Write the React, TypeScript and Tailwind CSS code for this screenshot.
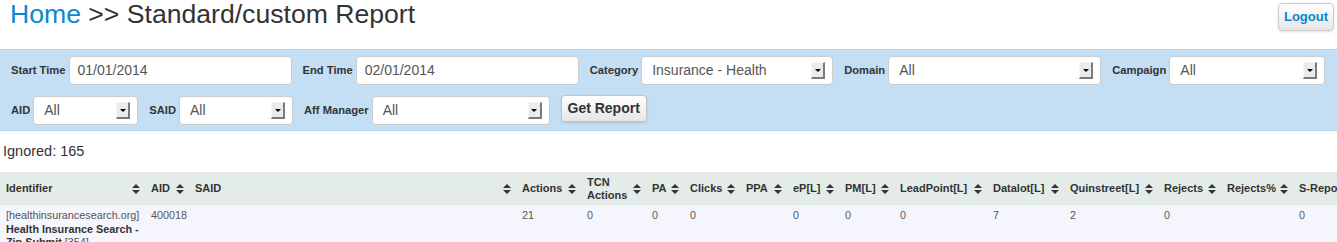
import React from 'react';

function SortIcon() {
    return (
        <svg width="8" height="10" viewBox="0 0 8 10" className="shrink-0">
            <path d="M0 4 L4 0 L8 4 Z" fill="#333" />
            <path d="M0 6 L8 6 L4 10 Z" fill="#333" />
        </svg>
    );
}

function SelectBox({ width, value }: { width: string; value: string }) {
    return (
        <div className={`${width} h-[29px] flex items-center bg-white border border-[#cccccc] rounded-[4px] pl-[10px] text-[14px] text-[#555]`}>
            <span className="flex-1">{value}</span>
            <div className="mr-[7px] w-[14px] h-[17px] flex items-center justify-center bg-[#ebebeb] border-t border-l border-[#f7f7f7] border-r-2 border-b-2 border-r-[#7a7a7a] border-b-[#7a7a7a]">
                <div className="w-0 h-0 border-l-[3px] border-r-[3px] border-t-[3px] border-l-transparent border-r-transparent border-t-black" />
            </div>
        </div>
    );
}

function TextBox({ width, value }: { width: string; value: string }) {
    return (
        <div className={`${width} h-[29px] flex items-center bg-white border border-[#cccccc] rounded-[4px] pl-[8px] text-[14px] text-[#555]`}>
            {value}
        </div>
    );
}

function Label({ children }: { children: React.ReactNode }) {
    return <span className="text-[11.2px] font-bold text-[#333] whitespace-nowrap">{children}</span>;
}

const columns: { label: React.ReactNode; w: string }[] = [
    { label: 'Identifier', w: 'w-[145px]' },
    { label: 'AID', w: 'w-[44px]' },
    { label: 'SAID', w: 'w-[327px]' },
    { label: 'Actions', w: 'w-[65px]' },
    { label: <>TCN<br />Actions</>, w: 'w-[65px]' },
    { label: 'PA', w: 'w-[38px]' },
    { label: 'Clicks', w: 'w-[56px]' },
    { label: 'PPA', w: 'w-[47px]' },
    { label: 'eP[L]', w: 'w-[52px]' },
    { label: 'PM[L]', w: 'w-[55px]' },
    { label: 'LeadPoint[L]', w: 'w-[93px]' },
    { label: 'Datalot[L]', w: 'w-[77px]' },
    { label: 'Quinstreet[L]', w: 'w-[94px]' },
    { label: 'Rejects', w: 'w-[63px]' },
    { label: 'Rejects%', w: 'w-[72px]' },
    { label: 'S-Report', w: 'w-[80px]' },
];

const row = ['', '400018', '', '21', '0', '0', '0', '', '0', '0', '0', '7', '2', '0', '', '0'];

export default function App() {
    return (
        <div className="w-[1337px] h-[242px] overflow-hidden bg-white font-['Liberation_Sans',Arial,sans-serif]">
            {/* Title bar */}
            <div className="flex items-start justify-between h-[49px]">
                <h1 className="pl-[10px] text-[26.6px] leading-[28px] text-[#333]">
                    <span className="text-[#0a88cf]">Home</span> &gt;&gt; Standard/custom Report
                </h1>
                <button className="mt-[3px] mr-[3px] h-[28px] w-[56px] rounded-[4px] border border-[#cccccc] bg-gradient-to-b from-white to-[#e6e6e6] text-[13px] font-bold text-[#0a88cf] shadow-sm">
                    Logout
                </button>
            </div>

            {/* Filters */}
            <div className="bg-[#c4def3] border-y border-[#b1d1ec] pl-[11px] pt-[6px] pb-[5px] flex flex-col gap-[11px]">
                <div className="flex items-center gap-[11px]">
                    <div className="flex items-center gap-[3px]"><Label>Start Time</Label><TextBox width="w-[223px]" value="01/01/2014" /></div>
                    <div className="flex items-center gap-[3px]"><Label>End Time</Label><TextBox width="w-[223px]" value="02/01/2014" /></div>
                    <div className="flex items-center gap-[3px]"><Label>Category</Label><SelectBox width="w-[192px]" value="Insurance - Health" /></div>
                    <div className="flex items-center gap-[3px]"><Label>Domain</Label><SelectBox width="w-[213px]" value="All" /></div>
                    <div className="flex items-center gap-[3px]"><Label>Campaign</Label><SelectBox width="w-[156px]" value="All" /></div>
                </div>
                <div className="flex items-start gap-[11px]">
                    <div className="flex items-center gap-[3px]"><Label>AID</Label><SelectBox width="w-[105px]" value="All" /></div>
                    <div className="flex items-center gap-[3px]"><Label>SAID</Label><SelectBox width="w-[114px]" value="All" /></div>
                    <div className="flex items-center gap-[3px]"><Label>Aff Manager</Label><SelectBox width="w-[178px]" value="All" /></div>
                    <button className="h-[27px] w-[86px] -mt-[1px] rounded-[4px] border border-[#c4c4c4] bg-gradient-to-b from-white to-[#e6e6e6] text-[14px] font-bold text-[#333] shadow-sm">
                        Get Report
                    </button>
                </div>
            </div>

            <div className="mt-[10px] pl-[3px] text-[14.5px] leading-[20px] text-[#333]">Ignored: 165</div>

            {/* Report table */}
            <table className="mt-[11px] w-[1373px] table-fixed border-collapse">
                <colgroup>
                    {columns.map((c, i) => <col key={i} className={c.w} />)}
                </colgroup>
                <thead>
                    <tr className="bg-[#e4ece9]">
                        {columns.map((c, i) => (
                            <th key={i} className="h-[33px] pl-[6px] pr-[5px] text-left align-middle text-[11px] leading-[13px] font-bold text-[#333]">
                                <div className="flex items-center justify-between">
                                    <span className="whitespace-nowrap">{c.label}</span>
                                    <SortIcon />
                                </div>
                            </th>
                        ))}
                    </tr>
                </thead>
                <tbody>
                    <tr className="bg-[#f5f5fd]">
                        <td className="pl-[6px] pr-[4px] pt-[4px] pb-[4px] align-top text-[10.8px] leading-[13.5px] text-[#555]">
                            [healthinsurancesearch.org] <b className="text-[#333]">Health Insurance Search - Zip Submit</b> [354]
                        </td>
                        {row.slice(1).map((v, i) => (
                            <td key={i} className="pl-[6px] pr-[4px] pt-[4px] align-top text-[10.8px] leading-[13.5px] text-[#555]">{v}</td>
                        ))}
                    </tr>
                </tbody>
            </table>
        </div>
    );
}
